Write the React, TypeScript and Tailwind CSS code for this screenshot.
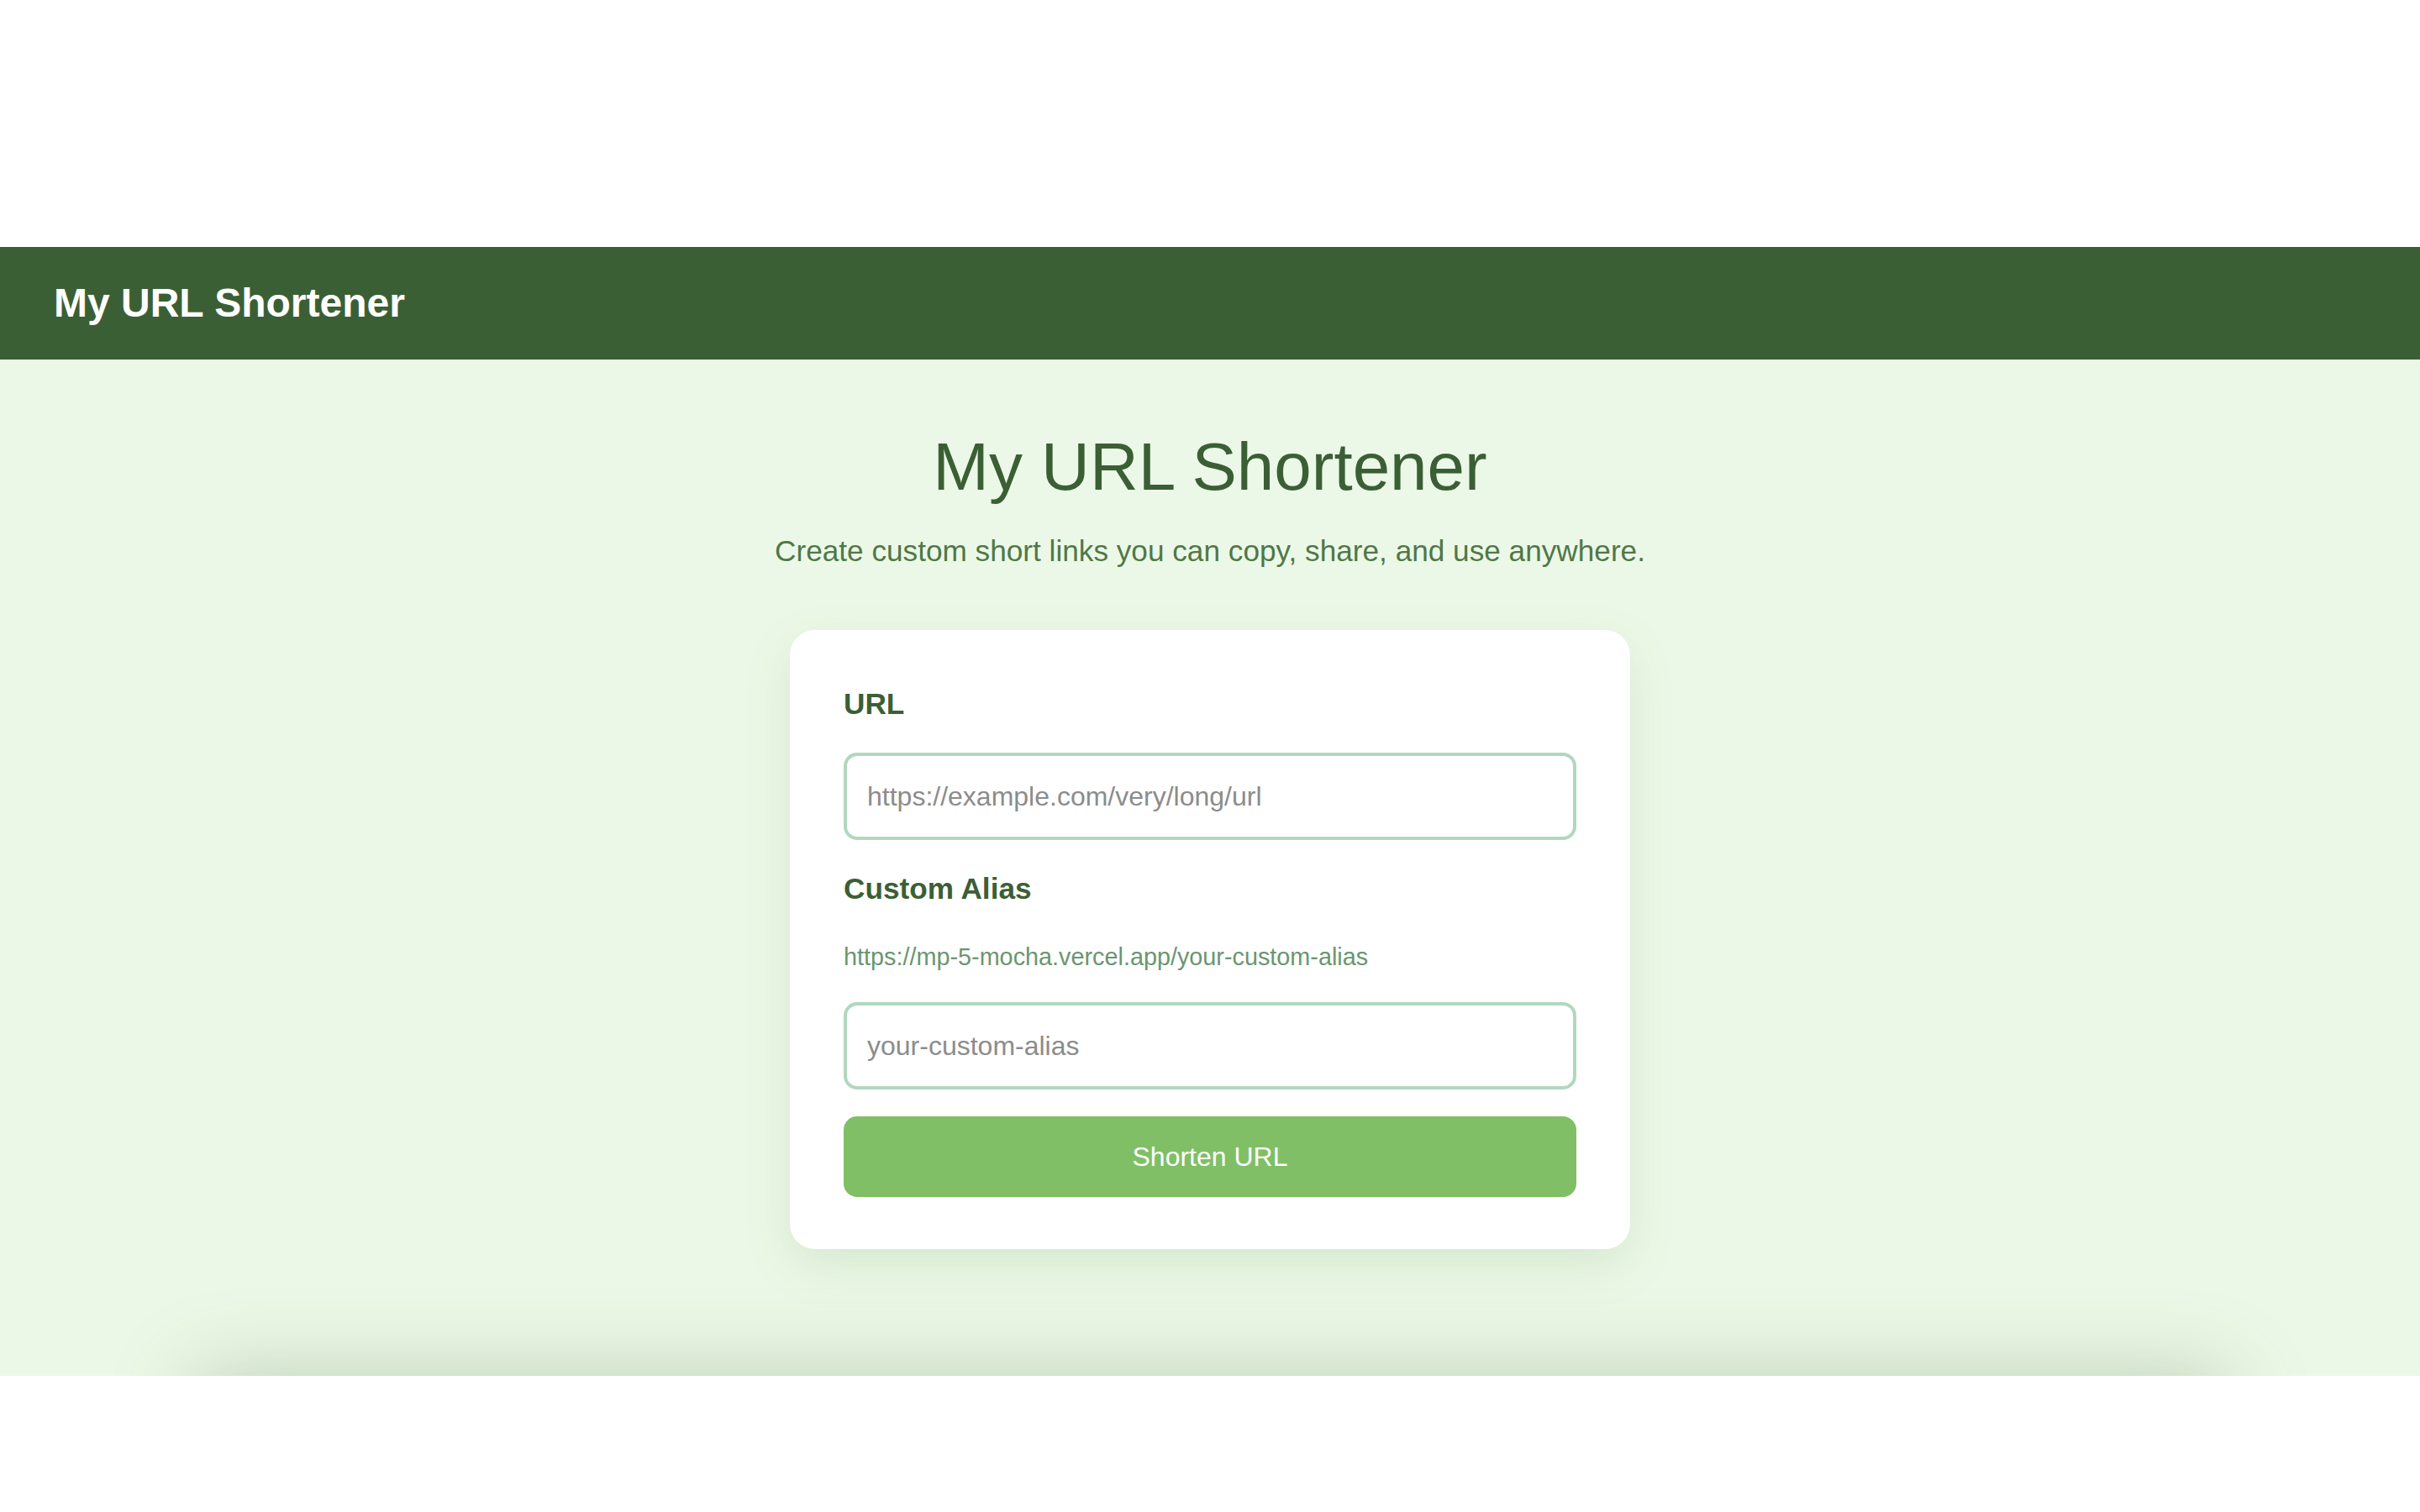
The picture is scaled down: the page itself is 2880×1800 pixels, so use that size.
const inputClass =
  "mb-[34px] block w-full rounded-2xl border-4 border-[#b2d7bf] bg-white px-6 py-6 text-[32px] leading-[48px] text-[#333] outline-none placeholder:text-[#8c8c8c]";

const labelClass = "block text-[35.2px] font-bold leading-[48px] text-[#3b5f35]";

export default function App() {
  return (
    <div className="min-h-screen bg-white font-['Liberation_Sans',Arial,sans-serif]">
      <div className="h-[294px]" />
      <header className="flex h-[134px] items-center bg-[#3b5f35] px-16">
        <h1 className="text-[48px] font-bold leading-[56px] text-white">My URL Shortener</h1>
      </header>
      <main className="relative flex h-[1210px] flex-col items-center bg-[#ecf8e7] pt-20">
        <h2 className="text-[80px] leading-[96px] text-[#3b5f35]">My URL Shortener</h2>
        <p className="mt-[26px] text-[35.2px] leading-[52px] text-[#4f7847]">
          Create custom short links you can copy, share, and use anywhere.
        </p>
        <form className="mt-[68px] w-[1000px] rounded-[30px] bg-white px-16 pb-[62px] pt-16 shadow-[0_20px_56px_rgba(70,130,55,0.13)]">
          <label className={`${labelClass} mb-[34px]`}>URL</label>
          <input type="text" placeholder="https://example.com/very/long/url" className={inputClass} />
          <label className={labelClass}>Custom Alias</label>
          <p className="mb-[34px] mt-[37px] text-[28.8px] leading-[40px] text-[#6a9670]">
            https://mp-5-mocha.vercel.app/your-custom-alias
          </p>
          <input type="text" placeholder="your-custom-alias" className={`${inputClass} !mb-[32px]`} />
          <button
            type="button"
            className="block h-24 w-full rounded-2xl bg-[#80bf65] text-[32px] leading-[48px] text-white"
          >
            Shorten URL
          </button>
        </form>
        {/* soft shadow cast up from the page edge */}
        <div className="absolute inset-x-[230px] bottom-[-100px] h-[100px] shadow-[0_0_100px_0_rgba(60,100,50,0.28)]" />
      </main>
      <footer className="relative z-10 h-[162px] bg-white" />
    </div>
  );
}
